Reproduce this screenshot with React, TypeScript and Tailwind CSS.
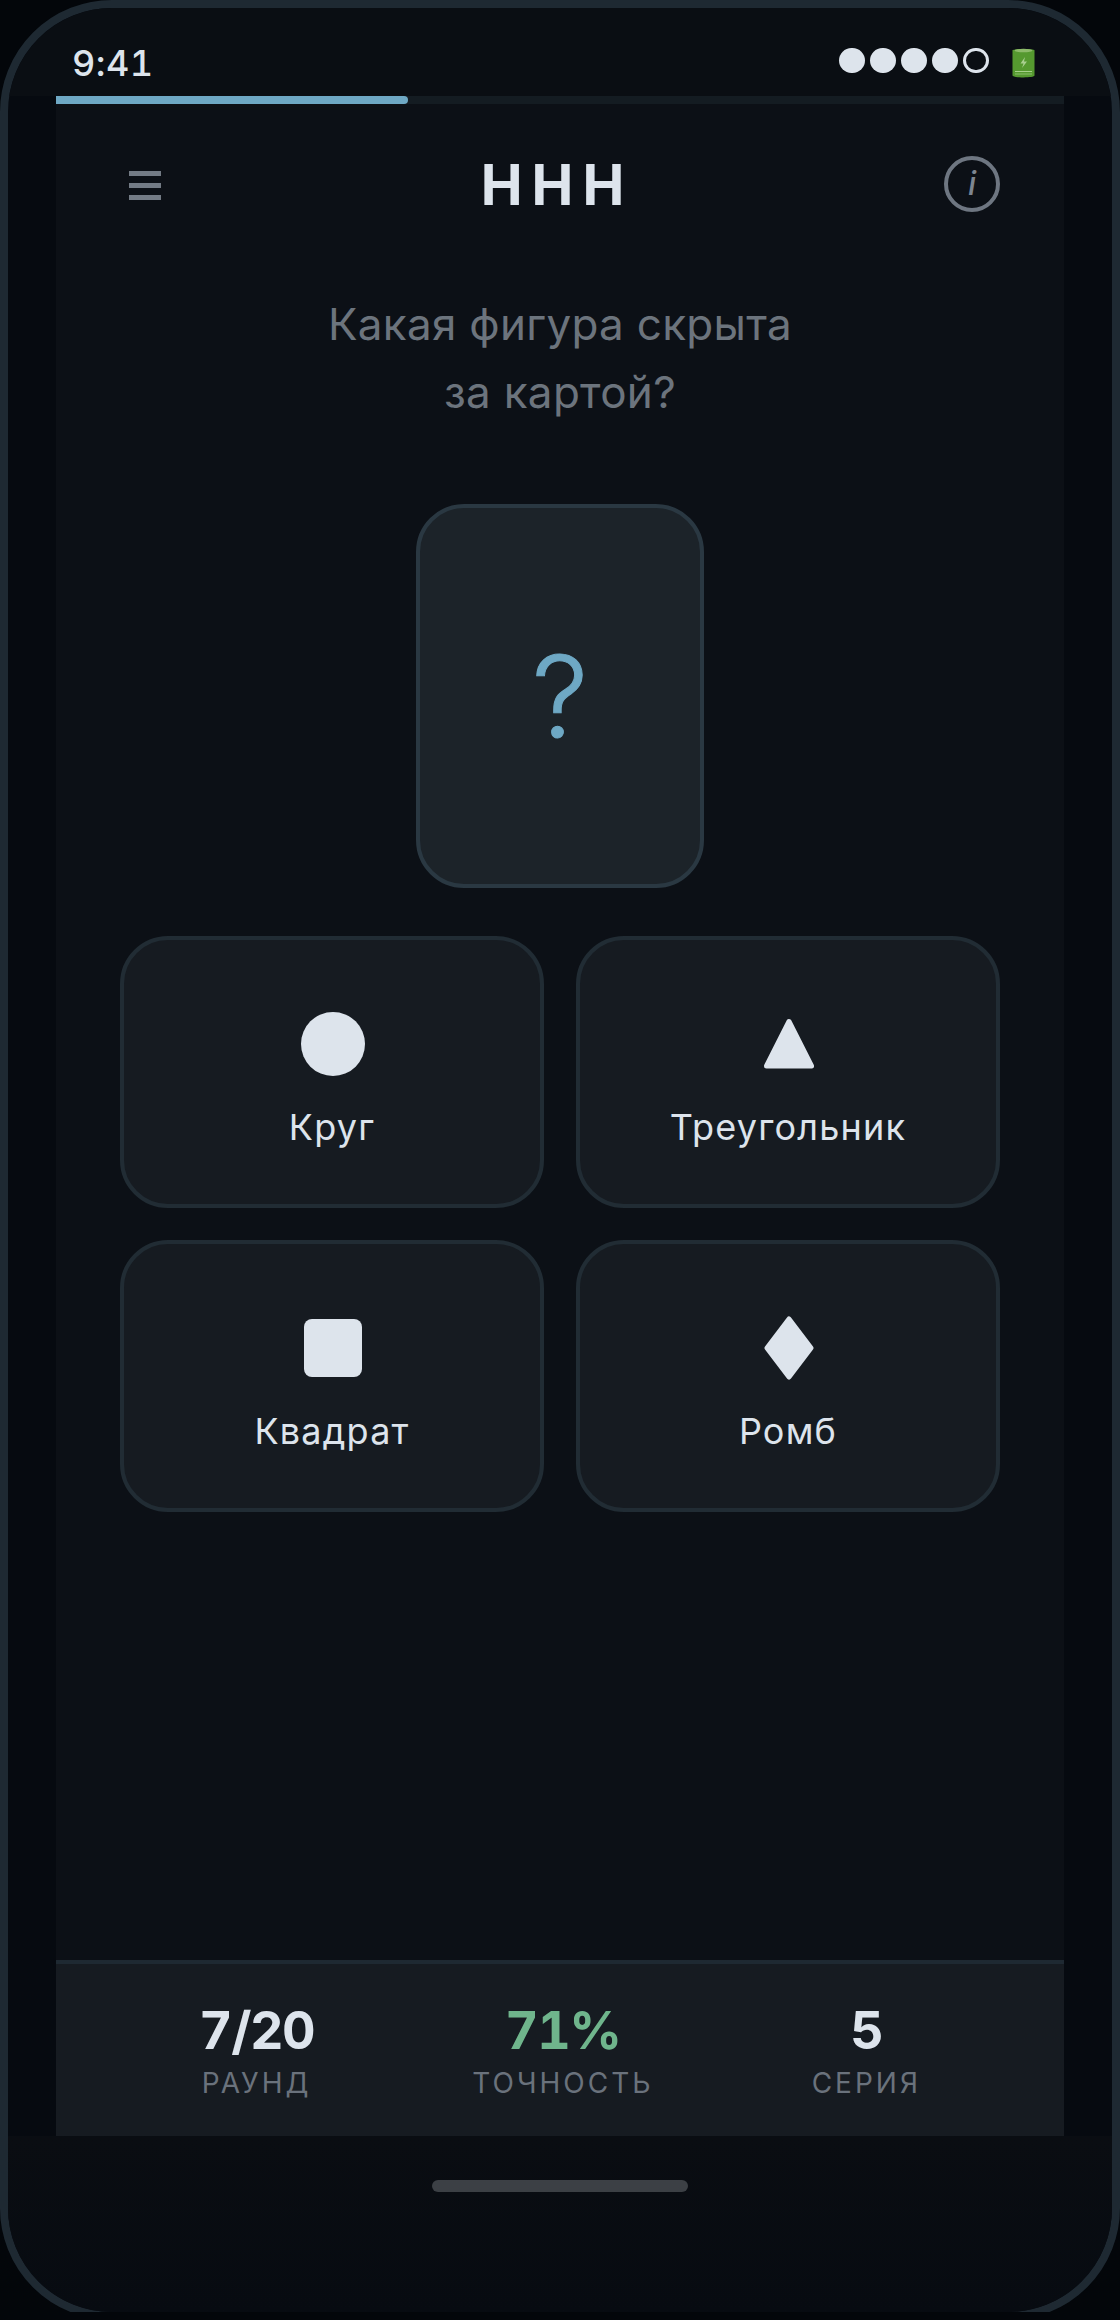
function Signal() {
  return (
    <div className="mb-[6px] flex items-center gap-[5px]">
      <div className="h-[25px] w-[26px] rounded-full bg-[#dde4ec]" />
      <div className="h-[25px] w-[26px] rounded-full bg-[#dde4ec]" />
      <div className="h-[25px] w-[26px] rounded-full bg-[#dde4ec]" />
      <div className="h-[25px] w-[26px] rounded-full bg-[#dde4ec]" />
      <div className="h-[25px] w-[26px] rounded-full border-[3px] border-[#dde4ec]" />
    </div>
  );
}
function Battery() {
  return (
    <svg width="23" height="32" viewBox="0 0 23 32" className="ml-[23px]">
      <path d="M0.500 3.500C0.500 1.500 22.500 1.500 22.500 3.500V28.500C22.500 31 0.500 31 0.500 28.500Z" fill="#55992f" />
      <ellipse cx="11.500" cy="3.500" rx="9" ry="1.800" fill="#8dbb6a" />
      <path d="M13 10l-4.500 6.500h3l-1.500 4.500 5-6.500h-3z" fill="#a9cf8f" />
      <rect x="3" y="24" width="17" height="1" fill="#a6d08a" />
      <rect x="3" y="26.500" width="17" height="1" fill="#8cc06c" />
    </svg>
  );
}
function Option({ label, children }: { label: string; children: React.ReactNode }) {
  return (
    <div className="flex h-[272px] flex-col items-center rounded-[48px] border-[4px] border-[#212c34] bg-[#161b21]">
      <div className="mt-[68px] ml-[2px] flex h-[72px] items-center justify-center">{children}</div>
      <div className="mt-[21px] text-[36px] leading-[52px] font-normal tracking-[1.2px] text-[#dde4ec]">{label}</div>
    </div>
  );
}
function Stat({ value, label, green }: { value: string; label: string; green?: boolean }) {
  return (
    <div className="flex flex-col items-center">
      <div className={`mt-[1px] text-[52px] leading-[60px] font-bold tracking-[-1.5px] tabular-nums ${green ? "text-[#6fb58c]" : "text-[#dde4ec]"}`}>{value}</div>
      <div className="mt-[4px] text-[28px] leading-[36px] tracking-[3px] text-[#6a727c]">{label}</div>
    </div>
  );
}
export default function App() {
  return (
    <div className="h-[2320px] w-[1120px] overflow-hidden bg-[#03060a] font-['Inter',sans-serif]">
      <div className="h-[2312px] w-[1120px] overflow-hidden">
        <div className="flex h-[2320px] w-[1120px] flex-col overflow-hidden rounded-[112px] border-[8px] border-[#1e2932] bg-[#060a10]">
          <div className="flex h-[88px] shrink-0 items-center justify-between bg-[#0a0e13] pt-[22px] pr-[77px] pl-[64px]">
            <span className="text-[36px] leading-[44px] font-medium tracking-[0.5px] text-[#dde4ec] tabular-nums">9:41</span>
            <div className="flex items-center">
              <Signal />
              <Battery />
            </div>
          </div>
          <div className="mx-[48px] flex min-h-0 flex-1 flex-col bg-[#0c1016]">
            <div className="h-[8px] shrink-0 bg-[#141c22]">
              <div className="h-[8px] w-[352px] rounded-r-[4px] bg-[#6ea8c4]" />
            </div>
            <div className="mt-[52px] flex h-[56px] shrink-0 items-center justify-between px-[64px]">
              <div className="mt-[2px] flex w-[50px] flex-col items-center gap-[7px]">
                <div className="h-[5px] w-[32px] bg-[#737b85]" />
                <div className="h-[5px] w-[32px] bg-[#737b85]" />
                <div className="h-[5px] w-[32px] bg-[#737b85]" />
              </div>
              <div className="mt-[2px] text-[56px] leading-[56px] font-bold tracking-[9px] text-[#dde4ec]">ННН</div>
              <div className="flex h-[56px] w-[56px] items-center justify-center rounded-full border-[4px] border-[#6e7681] text-[32px] font-medium text-[#7d8590] italic">i</div>
            </div>
            <div className="mt-[78px] text-center text-[44px] leading-[68px] tracking-[0.3px] text-[#6c747d]">
              <div>Какая фигура скрыта</div>
              <div>за картой?</div>
            </div>
            <div className="mx-auto mt-[78px] flex h-[384px] w-[288px] shrink-0 items-center justify-center rounded-[48px] border-[4px] border-[#2a3842] bg-[#1c2329] text-[112px] leading-none font-light text-[#6ea8c4] [-webkit-text-stroke:1px_#6ea8c4]">?</div>
            <div className="mt-[48px] grid grid-cols-2 gap-[32px] px-[64px]">
              <Option label="Круг">
                <div className="h-[64px] w-[64px] rounded-full bg-[#dde4ec]" />
              </Option>
              <Option label="Треугольник">
                <svg width="50" height="52" viewBox="0 0 50 52" fill="#dde4ec"><path d="M25 3.500 L47.500 48 H2.500 Z" stroke="#dde4ec" strokeWidth="5" strokeLinejoin="round" /></svg>
              </Option>
              <Option label="Квадрат">
                <div className="h-[58px] w-[58px] rounded-[8px] bg-[#dde4ec]" />
              </Option>
              <Option label="Ромб">
                <svg width="50" height="64" viewBox="0 0 50 64" fill="#dde4ec"><path d="M25 3 L47 32 L25 61 L3 32 Z" stroke="#dde4ec" strokeWidth="5" strokeLinejoin="round" /></svg>
              </Option>
            </div>
            <div className="flex-1" />
            <div className="flex h-[176px] shrink-0 items-start justify-around border-t-[4px] border-[#1e2932] bg-[#161b21] px-[64px] pt-[36px]">
              <Stat value="7/20" label="РАУНД" />
              <Stat value="71%" label="ТОЧНОСТЬ" green />
              <Stat value="5" label="СЕРИЯ" />
            </div>
          </div>
          <div className="flex h-[176px] shrink-0 justify-center bg-gradient-to-b from-[#0a0d12] to-[#070b11] pt-[44px]">
            <div className="h-[12px] w-[256px] rounded-full bg-[#3c4045]" />
          </div>
        </div>
      </div>
    </div>
  );
}
